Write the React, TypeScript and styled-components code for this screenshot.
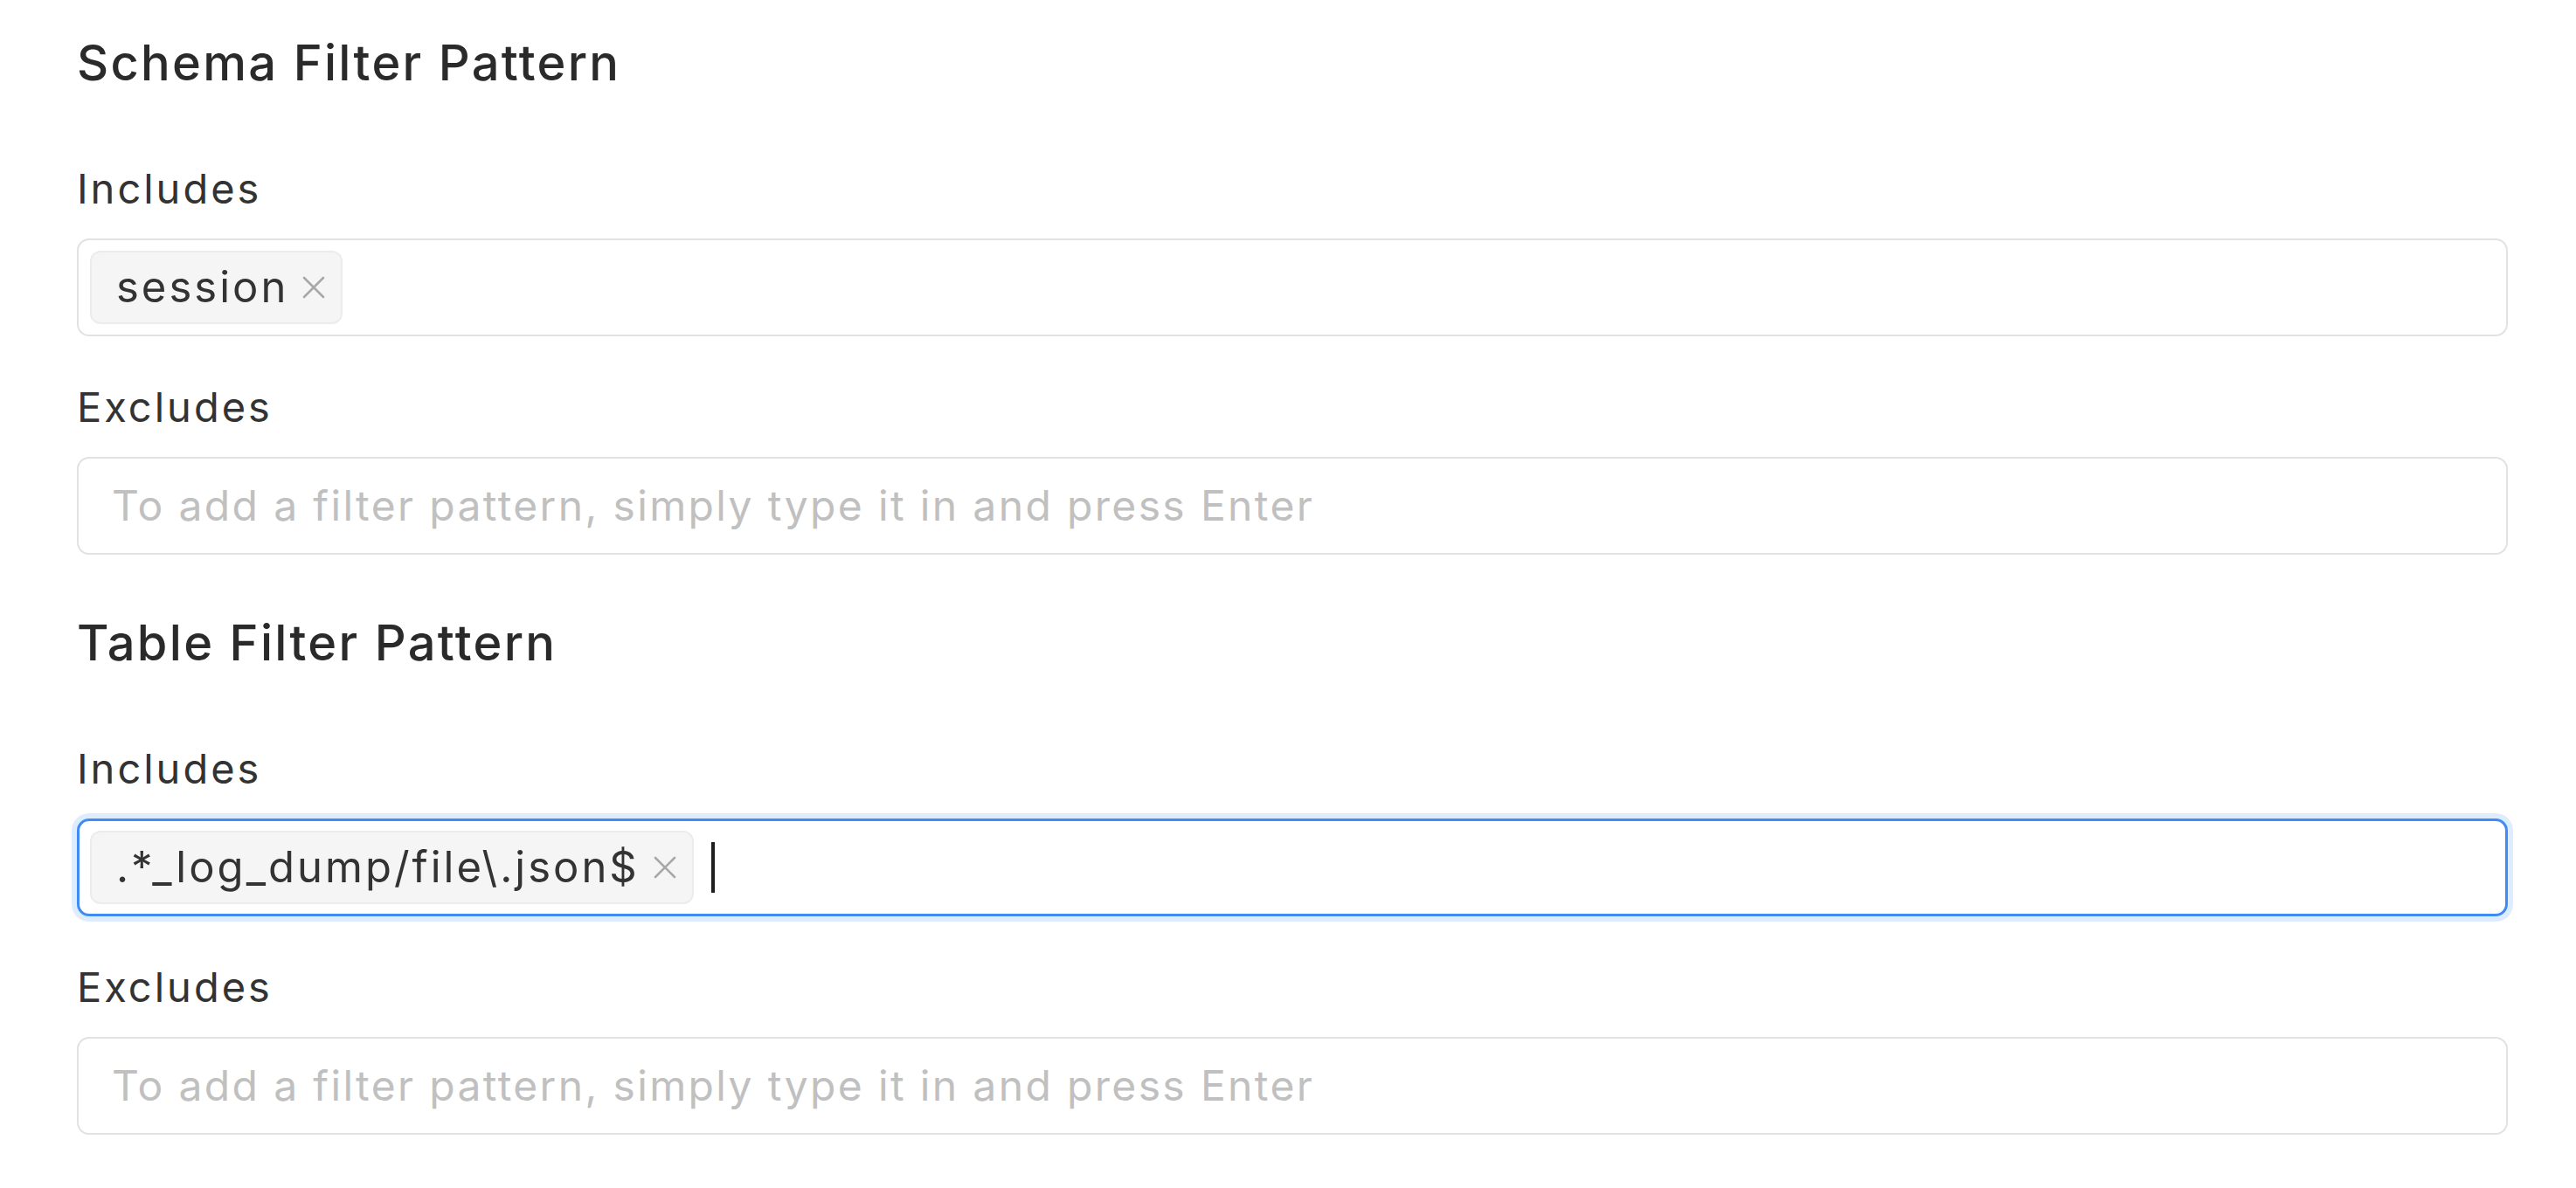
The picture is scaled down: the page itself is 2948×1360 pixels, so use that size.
import React from 'react';
import styled, { createGlobalStyle, css } from 'styled-components';

type TTag = {
  label: string;
};

type TField = {
  label: string;
  tags: TTag[];
  focused?: boolean;
};

type TSection = {
  title: string;
  fields: TField[];
};

const PLACEHOLDER = 'To add a filter pattern, simply type it in and press Enter';

const sections: TSection[] = [
  {
    title: 'Schema Filter Pattern',
    fields: [
      { label: 'Includes', tags: [{ label: 'session' }] },
      { label: 'Excludes', tags: [] },
    ],
  },
  {
    title: 'Table Filter Pattern',
    fields: [
      { label: 'Includes', tags: [{ label: '.*_log_dump/file\\.json$' }], focused: true },
      { label: 'Excludes', tags: [] },
    ],
  },
];

const CloseIcon = () => (
  <svg width="26" height="26" viewBox="0 0 26 26" fill="none">
    <path d="M2 2 L24 24 M24 2 L2 24" stroke="#a8a8a8" strokeWidth="2.6" strokeLinecap="round" />
  </svg>
);

const FilterField = ({ label, tags, focused }: TField) => (
  <Field>
    <FieldLabel>{label}</FieldLabel>
    <TagBox $focused={focused}>
      {tags.map((tag) => (
        <Tag key={tag.label}>
          <TagText>{tag.label}</TagText>
          <TagClose>
            <CloseIcon />
          </TagClose>
        </Tag>
      ))}
      {focused && <Caret />}
      {tags.length === 0 && !focused && <Placeholder>{PLACEHOLDER}</Placeholder>}
    </TagBox>
  </Field>
);

const App = () => {
  return (
    <>
      <GlobalStyle />
      <Page>
        {sections.map((section) => (
          <Section key={section.title}>
            <SectionTitle>{section.title}</SectionTitle>
            {section.fields.map((field) => (
              <FilterField key={section.title + field.label} {...field} />
            ))}
          </Section>
        ))}
      </Page>
    </>
  );
};

export default App;

const GlobalStyle = createGlobalStyle`
  html, body {
    margin: 0;
    padding: 0;
    background: #ffffff;
  }

  body {
    font-family: Inter, 'Noto Sans', sans-serif;
    color: #333333;
  }
`;

const Page = styled.div`
  display: flex;
  flex-direction: column;
  gap: 65px;
  padding: 36px 78px 0 88px;
`;

const Section = styled.section`
  display: flex;
  flex-direction: column;
`;

const SectionTitle = styled.h2`
  margin: 0 0 78px 0;
  font-size: 56px;
  font-weight: 500;
  line-height: 72px;
  letter-spacing: 2.3px;
  color: #2a2a2a;
`;

const Field = styled.div`
  display: flex;
  flex-direction: column;

  & + & {
    margin-top: 51px;
  }
`;

const FieldLabel = styled.label`
  margin-bottom: 27px;
  font-size: 47px;
  line-height: 60px;
  letter-spacing: 3px;
  color: #333333;
`;

const TagBox = styled.div<{ $focused?: boolean }>`
  box-sizing: border-box;
  display: flex;
  align-items: center;
  gap: 20px;
  height: 112px;
  padding: 0 13px;
  border: 2px solid #e2e2e2;
  border-radius: 14px;
  background: #ffffff;

  ${({ $focused }) =>
    $focused &&
    css`
      border: 3px solid #3f8cf5;
      box-shadow: 0 0 0 6px rgba(64, 150, 255, 0.18);
      padding: 0 12px;
    `}
`;

const Tag = styled.div`
  box-sizing: border-box;
  display: flex;
  align-items: center;
  gap: 16px;
  height: 84px;
  padding: 0 18px 0 28px;
  border: 2px solid #ececec;
  border-radius: 12px;
  background: #f5f5f5;
`;

const TagText = styled.span`
  font-size: 49px;
  line-height: 60px;
  letter-spacing: 3px;
  color: #333333;
  white-space: nowrap;
`;

const TagClose = styled.span`
  display: flex;
  align-items: center;
`;

const Caret = styled.span`
  width: 4px;
  height: 58px;
  background: #1f1f1f;
`;

const Placeholder = styled.span`
  padding-left: 25px;
  font-size: 48px;
  line-height: 60px;
  letter-spacing: 2.35px;
  color: #c0c0c0;
  white-space: nowrap;
`;
